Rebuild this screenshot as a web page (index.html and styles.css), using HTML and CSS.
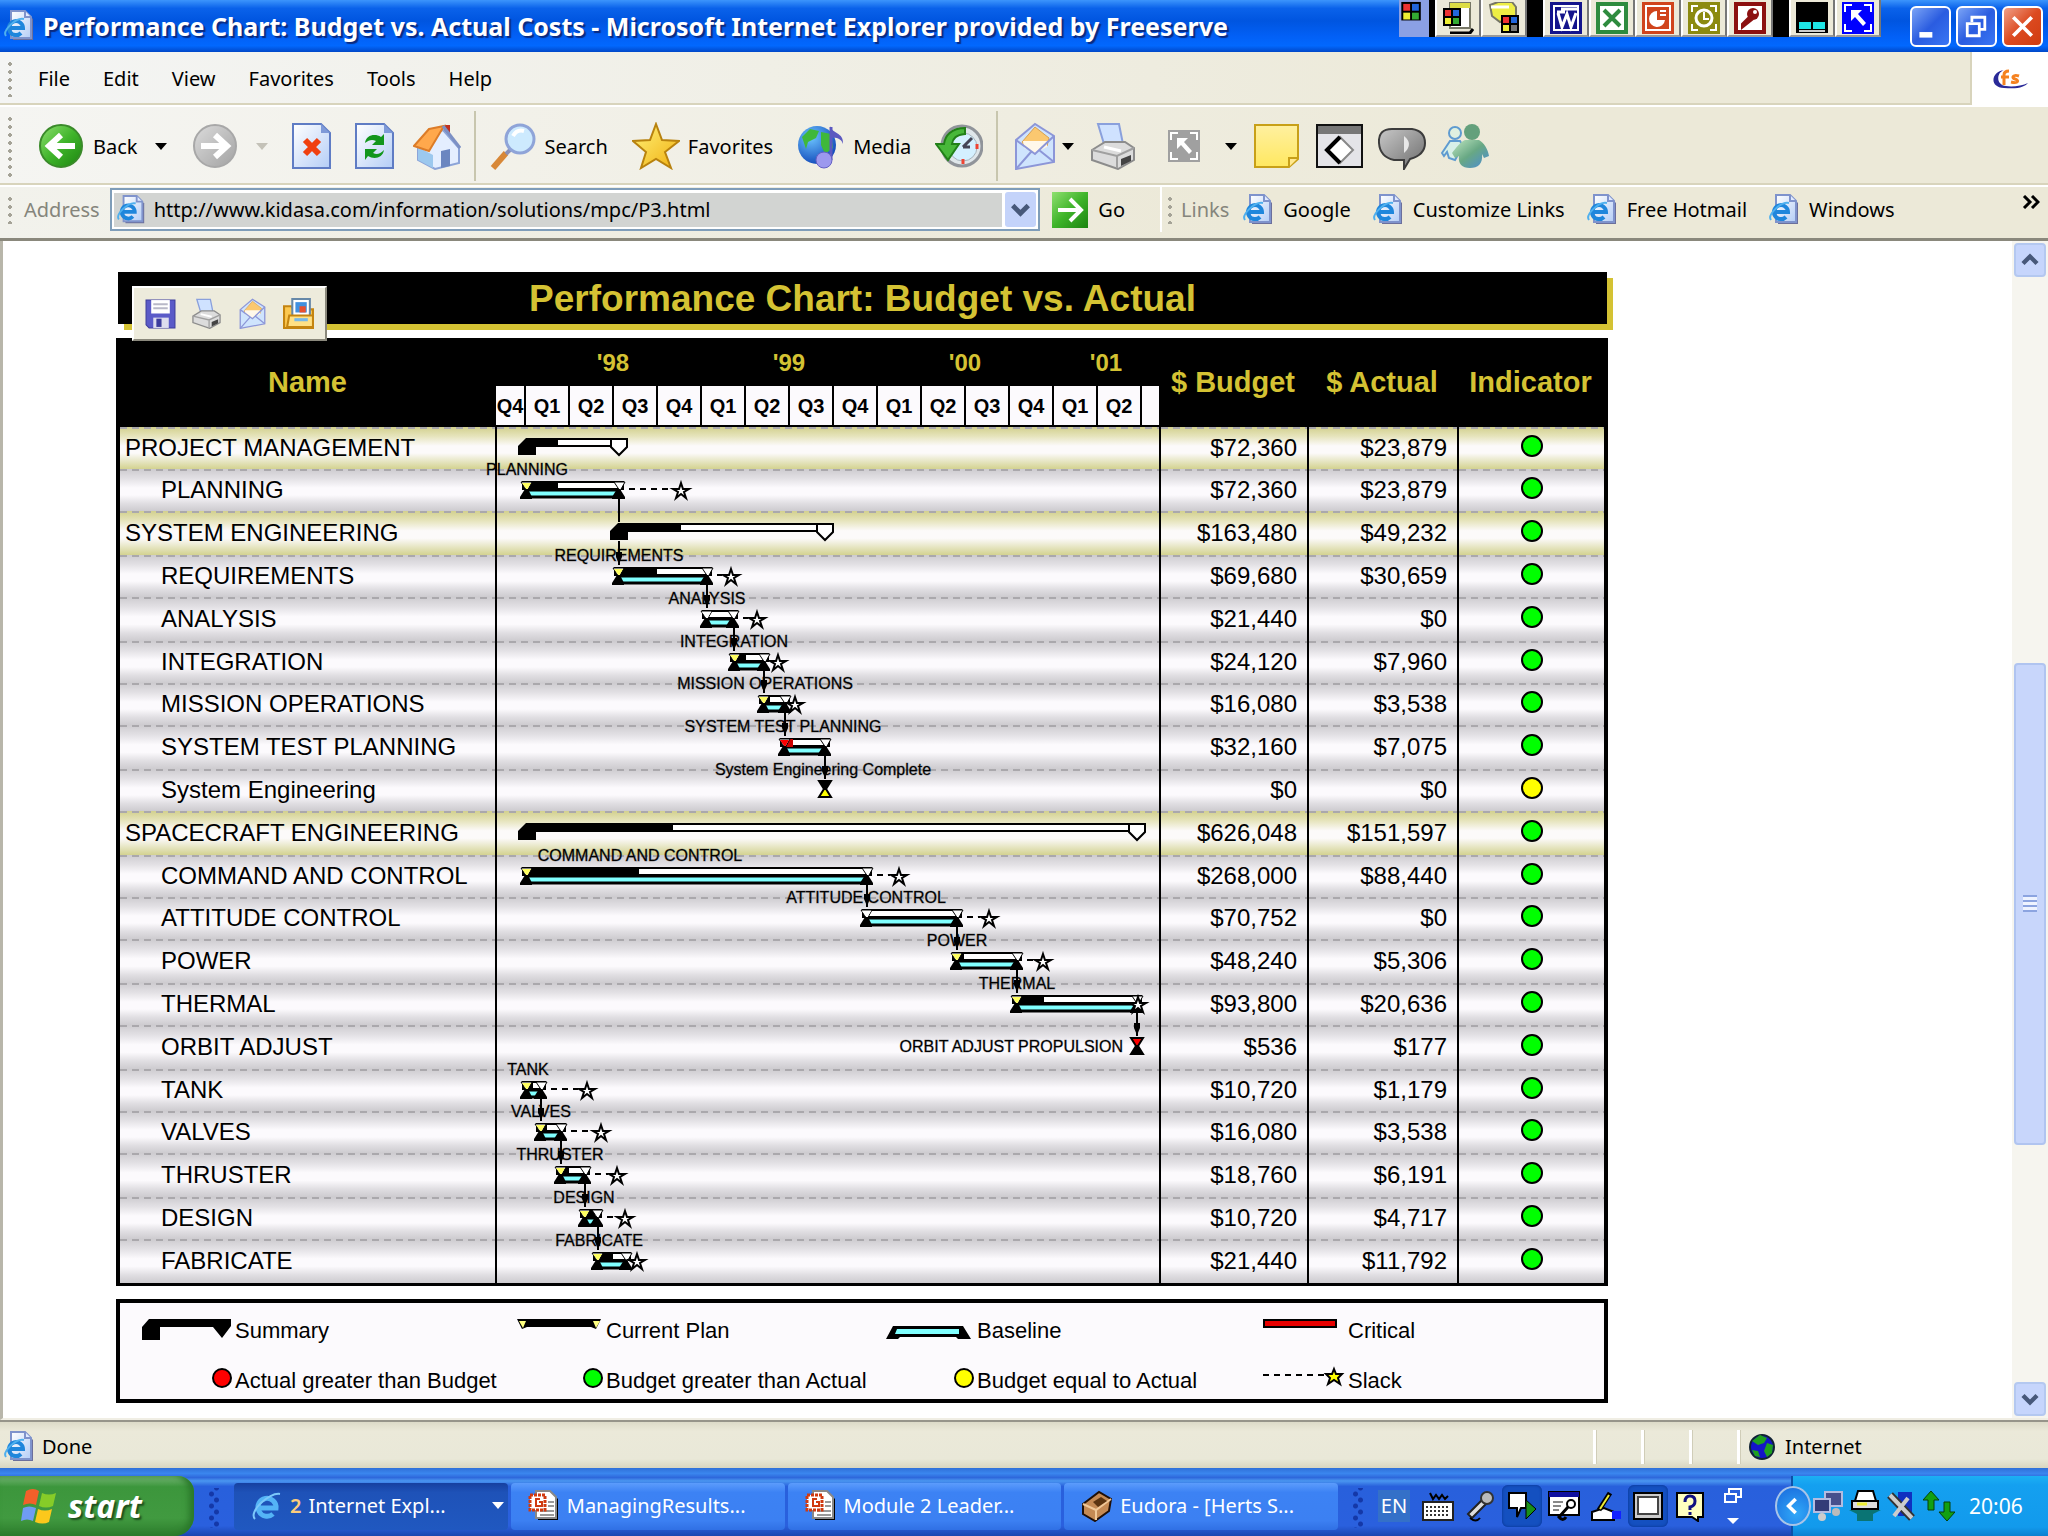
FILE: index.html
```html
<!DOCTYPE html>
<html lang="en">
<head>
  <meta charset="UTF-8" />
  <meta name="viewport" content="width=device-width, initial-scale=1.0"/>
  <title>Performance Chart: Budget vs. Actual Costs</title>
  <link rel="stylesheet" href="styles.css">
</head>
<body>

  <!-- Shared icons -->
  <svg class="sprite" aria-hidden="true">
    <defs>
      <linearGradient id="g-green" x1="0" y1="0" x2="1" y2="1"><stop offset="0" stop-color="#8fe070"/><stop offset=".5" stop-color="#3fb42a"/><stop offset="1" stop-color="#1c8410"/></linearGradient>
      <linearGradient id="g-grey" x1="0" y1="0" x2="1" y2="1"><stop offset="0" stop-color="#dcdcdc"/><stop offset="1" stop-color="#a2a2a2"/></linearGradient>
      <linearGradient id="g-page" x1="0" y1="0" x2="1" y2="1"><stop offset="0" stop-color="#fff"/><stop offset="1" stop-color="#b4cdf6"/></linearGradient>
      <linearGradient id="g-star" x1="0" y1="0" x2="1" y2="1"><stop offset="0" stop-color="#fff27a"/><stop offset="1" stop-color="#f0b010"/></linearGradient>
      <linearGradient id="g-note" x1="0" y1="0" x2="0" y2="1"><stop offset="0" stop-color="#fff0a0"/><stop offset="1" stop-color="#ffe860"/></linearGradient>
      <radialGradient id="g-globe" cx=".35" cy=".3" r=".8"><stop offset="0" stop-color="#6cc4ff"/><stop offset="1" stop-color="#0a3fb4"/></radialGradient>
      <linearGradient id="g-body" x1="0" y1="0" x2="1" y2="1"><stop offset="0" stop-color="#bfe6c0"/><stop offset=".5" stop-color="#68a884"/><stop offset="1" stop-color="#4a8ad8"/></linearGradient>
      <linearGradient id="g-talk" x1="0" y1="0" x2="1" y2="1"><stop offset="0" stop-color="#c8c8c8"/><stop offset="1" stop-color="#6c6c6c"/></linearGradient>
    </defs>
    <symbol id="i-page" viewBox="0 0 32 32">
      <path d="M9 3h14l6 6v21H9z" fill="#6b6f9c"/>
      <path d="M7 1h14l6 6v21H7z" fill="url(#g-page)" stroke="#7f93cc" stroke-width="2"/>
      <path d="M21 1v6h6" fill="#dfe9ff" stroke="#7f93cc" stroke-width="2"/>
      <path d="M4 18h15a7 7 0 1 0-2 5" fill="none" stroke="#1f86dc" stroke-width="4"/>
      <path d="M2 26c-4-5 10-19 18-17" fill="none" stroke="#4fb0ee" stroke-width="2"/>
    </symbol>
    <symbol id="i-ppt" viewBox="0 0 32 32">
      <path d="M10 3h14l6 6v21H10z" fill="#000"/>
      <path d="M8 1h14l6 6v21H8z" fill="#fff" stroke="#888" stroke-width="2"/>
      <path d="M20 12h6M20 16h6M12 21h14M12 25h14" stroke="#999" stroke-width="2"/>
      <path d="M2 5h15v15H2z" fill="#fff" stroke="#d03a10" stroke-width="3" stroke-dasharray="3 1"/>
      <path d="M12 9H8v7h6v-4h-3" fill="none" stroke="#d03a10" stroke-width="2"/>
    </symbol>
    <symbol id="i-printer" viewBox="0 0 48 48">
      <path d="M9 2h21l4 20H15z" fill="#cfe2ff" stroke="#8aa0dc" stroke-width="2"/>
      <path d="M3 28l13-8h20l9 6v12L29 47 3 38z" fill="#dcdcdc" stroke="#8c8c8c" stroke-width="2"/>
      <path d="M3 28l25 6 17-8M28 34v12" fill="none" stroke="#a0a0a0" stroke-width="2"/>
      <path d="M32 37l10-4v6l-10 5z" fill="#444"/>
      <path d="M15 25l17 4" stroke="#fff" stroke-width="3"/>
    </symbol>
    <symbol id="i-mail" viewBox="0 0 48 48">
      <path d="M5 18L24 2l19 12v26L5 47z" fill="#cfe4fd" stroke="#8c96d8" stroke-width="2"/>
      <path d="M11 20L24 5l14 11-2 8-12 6-10-5z" fill="#fbc870" stroke="#d8a050"/>
      <path d="M12 19h24v6l-12 6-11-5z" fill="#fff8ea"/>
      <path d="M5 18l19 14 19-18M5 47l15-17M43 40L28 28" fill="none" stroke="#8c96d8" stroke-width="2"/>
    </symbol>
    <symbol id="i-arrow-box" viewBox="0 0 32 32">
      <path d="M0 0h32v32H0z" fill="currentColor"/>
      <path d="M3 10V3h7M22 3h7v7M29 22v7h-7M10 29H3v-7" fill="none" stroke="#fff" stroke-width="2"/>
      <path d="M9 8h11l-4 4 8 9-3 3-8-9-4 4z" fill="#fff"/>
    </symbol>
  </svg>

  <header class="title-bar">
    <svg class="icon-s"><use href="#i-page"/></svg>
    <h1>Performance Chart: Budget vs. Actual Costs - Microsoft Internet Explorer provided by Freeserve</h1>
    <div class="office-bar">
      <span class="office-grip"><svg viewBox="0 0 28 38"><path d="M2 2h20v19H2z" fill="#000"/><path d="M4 4h7v7H4z" fill="#e33"/><path d="M13 4h7v7h-7z" fill="#26d"/><path d="M4 13h7v7H4z" fill="#ee3"/><path d="M13 13h7v7h-7z" fill="#3a3"/></svg></span>
      <button aria-label="New document"><svg viewBox="0 0 32 32"><path d="M8 0h20v26H8z" fill="#fff" stroke="#776" stroke-width="2"/><path d="M8 1h20v5H8z" fill="#dd4"/><path d="M8 31h20l3-4" stroke="#000" stroke-width="3" fill="none"/><path d="M1 6h18v18H1z" fill="#000"/><path d="M3 8h6v6H3z" fill="#e33"/><path d="M11 8h6v6h-6z" fill="#26d"/><path d="M3 16h6v6H3z" fill="#ee3"/><path d="M11 16h6v6h-6z" fill="#3a3"/></svg></button>
      <button aria-label="Open document"><svg viewBox="0 0 32 32"><path d="M2 3l8-3h14l4 5v9l-16 6-8-6z" fill="#ee4" stroke="#776" stroke-width="2"/><path d="M3 5h18" stroke="#fff" stroke-width="3"/><path d="M13 13h18v18H13z" fill="#000"/><path d="M15 15h6v6h-6z" fill="#e33"/><path d="M23 15h6v6h-6z" fill="#26d"/><path d="M15 23h6v6h-6z" fill="#ee3"/><path d="M23 23h6v6h-6z" fill="#777"/></svg></button>
      <span class="office-gap"></span>
      <button aria-label="Word"><svg viewBox="0 0 32 32"><path d="M0 0h32v32H0z" fill="#14148c"/><path d="M4 4h24v24H4z" fill="none" stroke="#fff" stroke-width="2"/><path d="M7 10h8M11 7h16M8 11l4 14 5-13 4 13 5-14" fill="none" stroke="#fff" stroke-width="3"/></svg></button>
      <button aria-label="Excel"><svg viewBox="0 0 32 32"><path d="M0 0h32v32H0z" fill="#2e8b3e"/><path d="M4 4h24v24H4z" fill="#fff"/><path d="M8 8l16 16M24 8L8 24" stroke="#2e8b3e" stroke-width="4"/></svg></button>
      <button aria-label="PowerPoint"><svg viewBox="0 0 32 32"><path d="M0 0h32v32H0z" fill="#d0441c"/><path d="M4 4h24v24H4z" fill="none" stroke="#fff" stroke-width="2"/><path d="M15 9a8 8 0 1 0 8 9h-8z" fill="#fff"/><path d="M18 9h6M18 13h6" stroke="#fff" stroke-width="2"/></svg></button>
      <button aria-label="Outlook"><svg viewBox="0 0 32 32"><path d="M0 0h32v32H0z" fill="#8c8a10"/><path d="M4 10V4h6M22 4h6v6M28 22v6h-6M10 28H4v-6" fill="none" stroke="#fff" stroke-width="2"/><circle cx="16" cy="16" r="8" fill="none" stroke="#fff" stroke-width="3"/><path d="M16 10v7h5" fill="none" stroke="#fff" stroke-width="2"/></svg></button>
      <button aria-label="Access"><svg viewBox="0 0 32 32"><path d="M0 0h32v32H0z" fill="#8c1010"/><path d="M4 4h24v24H4z" fill="#fff"/><circle cx="19" cy="12" r="6" fill="#8c1010"/><path d="M15 15l-7 7v4l10-8z" fill="#8c1010" stroke="#8c1010" stroke-width="2"/><circle cx="21" cy="10" r="2" fill="#fff"/></svg></button>
      <span class="office-gap"></span>
      <button aria-label="Desktop"><svg viewBox="0 0 32 32"><path d="M0 0h32v31H0z" fill="#000"/><path d="M3 20h12v7H3zM17 20h12v7H17z" fill="#1ee6e6"/><path d="M3 29h26" stroke="#ccc" stroke-width="2"/></svg></button>
      <button aria-label="Shortcut" class="blue"><svg><use href="#i-arrow-box"/></svg></button>
    </div>
    <div class="window-buttons">
      <button aria-label="Minimize"><svg viewBox="0 0 40 40"><path d="M8 26h14v6H8z" fill="#fff"/></svg></button>
      <button aria-label="Restore"><svg viewBox="0 0 40 40"><path d="M15 15V10h14v13h-5M10 17h13v13H10z" fill="none" stroke="#fff" stroke-width="3"/></svg></button>
      <button aria-label="Close" class="close"><svg viewBox="0 0 40 40"><path d="M10 10l20 20M30 10L10 30" stroke="#fff" stroke-width="4"/></svg></button>
    </div>
  </header>

  <nav class="menu-bar">
    <span class="grip"></span>
    <a href="#">File</a>
    <a href="#">Edit</a>
    <a href="#">View</a>
    <a href="#">Favorites</a>
    <a href="#">Tools</a>
    <a href="#">Help</a>
    <div class="brand">
      <svg viewBox="0 0 40 24"><path d="M14 3C2 4-2 20 14 21s20-1 24-5c-6 3-16 4-22 3C6 18 6 6 14 3z" fill="#2a2a98"/><path d="M14 18V8q0-4 5-4M11 10h8M29 9c-6-2-8 2-4 3s4 5-4 3" fill="none" stroke="#f58220" stroke-width="3"/></svg>
    </div>
  </nav>

  <div class="toolbar">
    <span class="grip"></span>
    <button class="labelled"><svg viewBox="0 0 48 48"><circle cx="24" cy="24" r="21" fill="url(#g-green)" stroke="#3a8a2a" stroke-width="2"/><path d="M38 24H13M24 13L12 24l12 11" fill="none" stroke="#fff" stroke-width="6"/></svg>Back<i class="caret far"></i></button>
    <button disabled aria-label="Forward"><svg viewBox="0 0 48 48"><circle cx="24" cy="24" r="21" fill="url(#g-grey)" stroke="#a8a8a8" stroke-width="2"/><path d="M10 24h25M24 13l12 11-12 11" fill="none" stroke="#fff" stroke-width="6"/></svg><i class="caret far"></i></button>
    <button aria-label="Stop"><svg viewBox="0 0 48 48"><path d="M6 2h28l9 9v35H6z" fill="url(#g-page)" stroke="#5f7cc4" stroke-width="2"/><path d="M34 2v9h9z" fill="#7f9ad8"/><path d="M18 18l14 14M32 18L18 32" stroke="#f04010" stroke-width="6"/></svg></button>
    <button aria-label="Refresh"><svg viewBox="0 0 48 48"><path d="M6 2h28l9 9v35H6z" fill="url(#g-page)" stroke="#5f7cc4" stroke-width="2"/><path d="M34 2v9h9z" fill="#7f9ad8"/><path d="M15 21c1-8 10-10 16-6l3-3v11H22l4-4c-4-2-7-1-11 2zM34 28c-1 8-10 10-16 6l-3 4V27h12l-4 4c4 2 7 1 11-3z" fill="#12961c"/></svg></button>
    <button aria-label="Home"><svg viewBox="0 0 48 48"><path d="M31 3h6v12h-6z" fill="#c03020"/><path d="M30 8l16 18v15L22 47 5 38V22z" fill="#e4eeff" stroke="#8ca4d8" stroke-width="2"/><path d="M5 25l15 8v13L5 38z" fill="#9cc8ee"/><path d="M16 7l15-3-15 25L1 24z" fill="#ffa84c" stroke="#dc7c28" stroke-width="2"/><path d="M30 4l17 22" stroke="#7c90c4" stroke-width="3"/><path d="M28 29l9-2v17l-9 2z" fill="#6b86c0"/></svg></button>
    <span class="sep"></span>
    <button class="labelled"><svg viewBox="0 0 48 48"><path d="M17 31L4 46" stroke="#d88838" stroke-width="6"/><path d="M22 27l-5 5" stroke="#8a90b8" stroke-width="4"/><circle cx="31" cy="17" r="14" fill="#cdeafe" stroke="#8fa4d8" stroke-width="3"/><path d="M24 14q4-7 11-5" fill="none" stroke="#fff" stroke-width="4"/></svg>Search</button>
    <button class="labelled"><svg viewBox="0 0 48 48"><path d="M24 2l6 16 17 1-14 11 6 16-15-9-15 9 5-16L1 19l17-1z" fill="url(#g-star)" stroke="#b8820e" stroke-width="2"/></svg>Favorites</button>
    <button class="labelled"><svg viewBox="0 0 48 48"><circle cx="20" cy="23" r="19" fill="url(#g-globe)"/><path d="M5 15l8-8 9 2-3 7-8 4-2 7zM24 10l10 2 2 14-8 6-4-9z" fill="#3fb83a"/><path d="M34 5v33" stroke="#5c58c0" stroke-width="3"/><path d="M33 4c2 8 14 6 13 18-2-6-7-7-13-6z" fill="#5c58c0"/><circle cx="27" cy="38" r="8" fill="#9c98ee" stroke="#6460c4"/></svg>Media</button>
    <button aria-label="History"><svg viewBox="0 0 48 48"><circle cx="27" cy="24" r="20" fill="#dfe6ea" stroke="#90949a" stroke-width="3"/><circle cx="28" cy="25" r="14" fill="#d4f0ff" stroke="#a8b4bc"/><path d="M28 25l9-9M28 25h7" stroke="#445" stroke-width="3"/><path d="M42 22v5M28 37v5" stroke="#e43" stroke-width="3"/><path d="M30 6C16 6 10 14 9 22H1l12 16 11-16h-7c1-6 4-9 13-10z" fill="#48b83a" stroke="#228018" stroke-width="2"/></svg></button>
    <span class="sep"></span>
    <button aria-label="Mail"><svg><use href="#i-mail"/></svg><i class="caret"></i></button>
    <button aria-label="Print"><svg><use href="#i-printer"/></svg></button>
    <button aria-label="Capture" class="grey"><svg viewBox="0 0 48 48"><use href="#i-arrow-box" x="8" y="8" width="32" height="32"/></svg><i class="caret far"></i></button>
    <button aria-label="Note"><svg viewBox="0 0 48 48"><path d="M3 3h43v34l-9 8H3z" fill="url(#g-note)" stroke="#c8a018" stroke-width="2"/><path d="M37 45v-9h9" fill="#ffe890" stroke="#c8a018" stroke-width="2"/></svg></button>
    <button aria-label="Discuss"><svg viewBox="0 0 48 48"><path d="M2 3h45v42H2z" fill="#e4e4e8" stroke="#111" stroke-width="2"/><path d="M3 4h43v8H3z" fill="#777"/><path d="M25 15L38 28 25 41 12 28z" fill="#fff" stroke="#888" stroke-width="2"/><path d="M25 15L12 28l13 13" fill="none" stroke="#000" stroke-width="4"/></svg></button>
    <button aria-label="Talk"><svg viewBox="0 0 48 48"><path d="M14 7h20q13 2 13 14T32 37l-6 10v-9H16Q2 35 1 21T14 7z" fill="url(#g-talk)" stroke="#3c3c3c" stroke-width="2"/><path d="M26 14q10 8 0 17z" fill="#e8e8e8"/></svg></button>
    <button aria-label="Messenger"><svg viewBox="0 0 48 48"><circle cx="14" cy="11" r="6" fill="#dff0e0" stroke="#5f9bd0" stroke-width="2"/><path d="M1 31l8-12h10l3 5-8 14-6-2-2-6-3 4z" fill="#d8f0e8" stroke="#5f9bd0" stroke-width="2"/><circle cx="31" cy="10" r="8" fill="#64a07c"/><path d="M24 18h14c5 3 9 9 10 16l-5 2-2-4c1 10-4 14-12 14s-12-4-11-12l-4 2-3-5c4-5 8-11 13-13z" fill="url(#g-body)"/></svg></button>
  </div>

  <div class="address-bar">
    <span class="grip"></span>
    <label for="address">Address</label>
    <div class="address-box">
      <svg class="icon-s"><use href="#i-page"/></svg>
      <input id="address" type="text" value="http://www.kidasa.com/information/solutions/mpc/P3.html">
      <button aria-label="Show addresses"><svg viewBox="0 0 32 36"><path d="M8 14l8 8 8-8" fill="none" stroke="#47587a" stroke-width="5"/></svg></button>
    </div>
    <button class="go"><svg viewBox="0 0 36 36"><path d="M0 0h36v36H0z" fill="url(#g-green)"/><path d="M6 18h20M18 7l11 11-11 11" fill="none" stroke="#fff" stroke-width="4"/></svg>Go</button>
    <div class="links">
      <span class="grip"></span>
      <span class="links-title">Links</span>
      <a href="#"><svg class="icon-s"><use href="#i-page"/></svg>Google</a>
      <a href="#"><svg class="icon-s"><use href="#i-page"/></svg>Customize Links</a>
      <a href="#"><svg class="icon-s"><use href="#i-page"/></svg>Free Hotmail</a>
      <a href="#"><svg class="icon-s"><use href="#i-page"/></svg>Windows</a>
      <button class="more" aria-label="More links"><svg viewBox="0 0 18 14"><path d="M2 1l6 6-6 6M10 1l6 6-6 6" fill="none" stroke="#000" stroke-width="3"/></svg></button>
    </div>
  </div>

  <div class="view">
    <main class="page">
      <section class="chart">
        <h2>Performance Chart: Budget vs. Actual</h2>

        <div class="image-tools">
          <button aria-label="Save image"><svg viewBox="0 0 30 30"><path d="M1 2h28v27H4l-3-3z" fill="#5a5ac8" stroke="#3c3c9c"/><path d="M6 2h18v13H6z" fill="#fff"/><path d="M8 6h14M8 10h14" stroke="#b8b8c8" stroke-width="2"/><path d="M8 19h15v10H8z" fill="#dde"/><path d="M11 20h5v8h-5z" fill="#3c3c9c"/></svg></button>
          <button aria-label="Print image"><svg><use href="#i-printer"/></svg></button>
          <button aria-label="Mail image"><svg><use href="#i-mail"/></svg></button>
          <button aria-label="My pictures"><svg viewBox="0 0 30 30"><path d="M1 8h7l2 3h19v18H1z" fill="#fcc850" stroke="#c48410" stroke-width="2"/><path d="M9 1h17v17H9z" fill="#fff" stroke="#6688a8" stroke-width="2"/><path d="M12 4h11v10H12z" fill="#4090e0"/><path d="M16 8h6v6h-6z" fill="#e85030"/><path d="M6 17h23v11H4z" fill="#ffe084" stroke="#c48410" stroke-width="2"/><path d="M11 21h13" stroke="#78b8e8" stroke-width="3"/></svg></button>
        </div>

        <table>
          <colgroup>
            <col>
            <col class="col-gantt">
            <col class="col-budget">
            <col class="col-actual">
            <col class="col-indicator">
          </colgroup>
          <thead>
            <tr>
              <th>Name</th>
              <th class="timeline">
                <div class="years">
                  <span>'98</span><span>'99</span><span>'00</span><span class="last">'01</span>
                </div>
                <div class="quarters">
                  <span>Q4</span><span>Q1</span><span>Q2</span><span>Q3</span><span>Q4</span><span>Q1</span><span>Q2</span><span>Q3</span><span>Q4</span><span>Q1</span><span>Q2</span><span>Q3</span><span>Q4</span><span>Q1</span><span>Q2</span><span></span>
                </div>
              </th>
              <th>$ Budget</th>
              <th>$ Actual</th>
              <th>Indicator</th>
            </tr>
          </thead>
          <tbody id="rows"></tbody>
        </table>

        <ul class="legend">
          <li><svg viewBox="0 0 112 30"><path d="M22 24V11l7-8h82v7l-9 12-9-11H40v13z"/></svg>Summary</li>
          <li><svg viewBox="0 0 112 30"><path d="M26 3h84l-5 10-5-2H36l-5 2z"/><path d="M28 5h7l-3 7zM102 5h7l-4 7z" fill="#ffff80"/></svg>Current Plan</li>
          <li><svg viewBox="0 0 112 30"><path d="M24 23l7-13h70l8 13H96l-2-2H38l-2 2z"/><path d="M35 13h62v5H33z" fill="#80ffff"/></svg>Baseline</li>
          <li><svg viewBox="0 0 112 30"><path d="M31 4h72v7H31z" fill="#e80000" stroke="#000" stroke-width="2"/></svg>Critical</li>
          <li><svg viewBox="0 0 112 30"><circle cx="102" cy="12" r="9" fill="#f00" stroke="#000" stroke-width="2"/></svg>Actual greater than Budget</li>
          <li><svg viewBox="0 0 112 30"><circle cx="102" cy="12" r="9" fill="#0f0" stroke="#000" stroke-width="2"/></svg>Budget greater than Actual</li>
          <li><svg viewBox="0 0 112 30"><circle cx="102" cy="12" r="9" fill="#ff0" stroke="#000" stroke-width="2"/></svg>Budget equal to Actual</li>
          <li><svg viewBox="0 0 112 30"><path d="M30 9h64" stroke="#000" stroke-width="2" stroke-dasharray="6 5"/><path d="M101 3l2 5h6l-4 4 2 6-6-4-6 4 2-6-4-4h6z" fill="#ff0" stroke="#000" stroke-width="2"/></svg>Slack</li>
        </ul>
      </section>
    </main>

    <div class="scrollbar">
      <button aria-label="Scroll up"><svg viewBox="0 0 32 32"><path d="M8 20l8-8 8 8" fill="none" stroke="#47587a" stroke-width="5"/></svg></button>
      <div class="track"><div class="thumb"></div></div>
      <button aria-label="Scroll down"><svg viewBox="0 0 32 32"><path d="M8 12l8 8 8-8" fill="none" stroke="#47587a" stroke-width="5"/></svg></button>
    </div>
  </div>

  <footer class="status-bar">
    <svg class="icon-s"><use href="#i-page"/></svg>
    <span class="status-text">Done</span>
    <span class="pane"></span>
    <span class="pane"></span>
    <span class="pane"></span>
    <span class="pane zone"><svg viewBox="0 0 28 28"><circle cx="14" cy="14" r="12" fill="#1414c8" stroke="#123" stroke-width="2"/><path d="M4 8l8-6 7 3-3 5-6 2zM19 10l6 2-1 8-5 4-3-6zM4 17l6 1 2 6-5-1z" fill="#1fa01f"/></svg>Internet</span>
  </footer>

  <div class="taskbar">
    <button class="start"><svg viewBox="0 0 38 38"><path d="M6 4q7-4 13 0l-3 14q-6-3-13 0z" fill="#f2602a"/><path d="M22 6q7 3 14 0l-3 13q-7 3-14 0z" fill="#86cc28"/><path d="M3 21q6-3 13 0l-3 13q-6-3-12 0z" fill="#6f9cf4"/><path d="M18 22q7 3 14 0l-3 13q-6 3-14 0z" fill="#fcc81c"/></svg>start</button>
    <span class="dots"></span>
    <div class="tasks">
      <button class="active"><svg viewBox="0 0 32 32"><path d="M7 18h18a9 9 0 1 0-3 6" fill="none" stroke="#54b4f6" stroke-width="5"/><path d="M4 29C-3 22 18 2 29 4" fill="none" stroke="#7cc8fa" stroke-width="2"/></svg><b>2</b>Internet Expl...<i class="caret"></i></button>
      <button><svg><use href="#i-ppt"/></svg>ManagingResults...</button>
      <button><svg><use href="#i-ppt"/></svg>Module 2 Leader...</button>
      <button><svg viewBox="0 0 32 32"><path d="M2 14L18 2l12 7-2 12-14 10L2 24z" fill="#c48a54" stroke="#201008" stroke-width="2"/><path d="M2 14l13 6 15-11M15 20v10" fill="none" stroke="#f0c898" stroke-width="2"/><path d="M12 12l8-5 6 4-9 6z" fill="#5a3410"/></svg>Eudora - [Herts S...</button>
    </div>
    <span class="dots"></span>
    <div class="language">
      <span class="en">EN</span>
      <button aria-label="Keyboard"><svg viewBox="0 0 32 32"><path d="M8 3l3 6 3-4 3 4 3-4 3 4 3-3" fill="none" stroke="#000" stroke-width="2"/><path d="M1 12h30v18H1z" fill="#fff" stroke="#222" stroke-width="2"/><path d="M4 17h24M4 21h24M4 25h24" stroke="#333" stroke-width="2" stroke-dasharray="2 2"/></svg></button>
      <button aria-label="Microphone"><svg viewBox="0 0 32 32"><path d="M4 24L19 9l4 4L8 28z" fill="#ddd" stroke="#222" stroke-width="2"/><circle cx="23" cy="8" r="6" fill="#bbb" stroke="#333" stroke-width="2"/><path d="M6 28q6 5 10 0" fill="none" stroke="#000" stroke-width="2"/></svg></button>
      <button aria-label="Speech" class="on"><svg viewBox="0 0 32 32"><path d="M3 3h17v15h-5l-4 9v-9H3z" fill="#fff" stroke="#000" stroke-width="2"/><path d="M20 10l10 9-10 10z" fill="#189018" stroke="#000"/></svg></button>
      <button aria-label="Handwriting tools"><svg viewBox="0 0 32 32"><path d="M1 2h30v23H1z" fill="#fff" stroke="#000" stroke-width="2"/><path d="M1 2h30v5H1z" fill="#1010a0"/><path d="M5 12h10M5 16h8M5 20h6" stroke="#888" stroke-width="2"/><circle cx="23" cy="14" r="4" fill="none" stroke="#000" stroke-width="2"/><path d="M20 17l-9 10q4 5 7 0" fill="none" stroke="#000" stroke-width="3"/></svg></button>
      <button aria-label="Writing pad"><svg viewBox="0 0 32 32"><path d="M2 22l12-4 10 4v8H2z" fill="#fff" stroke="#000" stroke-width="2"/><path d="M20 3L9 20" stroke="#000" stroke-width="5"/><path d="M19 5l-9 14" stroke="#ee3" stroke-width="2"/><path d="M22 21h9v8h-9z" fill="#12f"/></svg></button>
      <button aria-label="Pad" class="on"><svg viewBox="0 0 32 32"><path d="M2 3h28v26H2z" fill="#ccc" stroke="#000" stroke-width="2"/><path d="M6 7h20v17H6z" fill="#fff" stroke="#444" stroke-width="2"/></svg></button>
      <button aria-label="Help"><svg viewBox="0 0 32 32"><path d="M3 3h26v24h-5v4l-6-4H3z" fill="#ffffc0" stroke="#000" stroke-width="2"/><path d="M11 12q0-6 5-6t5 5-5 6v3M16 22v3" fill="none" stroke="#101080" stroke-width="3"/></svg></button>
      <button aria-label="Language options"><svg viewBox="0 0 32 44"><path d="M13 9V5h12v8h-4M9 10h11v8H9z" fill="none" stroke="#fff" stroke-width="2"/><path d="M11 34h12l-6 6z" fill="#fff"/></svg></button>
    </div>
    <div class="tray">
      <button class="expand" aria-label="Show hidden icons"><svg viewBox="0 0 36 36"><path d="M21 10l-8 8 8 8" fill="none" stroke="#fff" stroke-width="4"/></svg></button>
      <svg viewBox="0 0 32 32"><path d="M13 2h17v14H13z" fill="#46508c" stroke="#b4bce0" stroke-width="2"/><path d="M2 9h16v13H2z" fill="#323c78" stroke="#b4bce0" stroke-width="2"/><circle cx="10" cy="27" r="4" fill="#ccc"/><circle cx="24" cy="22" r="4" fill="#bbb"/></svg>
      <svg viewBox="0 0 32 32"><path d="M9 1h15l3 10H6z" fill="#fff" stroke="#000" stroke-width="2"/><path d="M3 11h26v8H3z" fill="#ddd" stroke="#000" stroke-width="2"/><path d="M8 14h10" stroke="#ee3" stroke-width="3"/><path d="M0 20h32l-8 4v7H8v-7z" fill="#0a7474"/></svg>
      <svg viewBox="0 0 32 32"><path d="M12 2h14v24H12z" fill="#1030c0"/><path d="M4 5l22 23" stroke="#333" stroke-width="8"/><path d="M4 5l22 23M22 8L8 26" stroke="#ccc" stroke-width="4"/></svg>
      <svg viewBox="0 0 32 32"><path d="M8 1l8 9h-5v10H5V10H0zM24 31l-8-9h5V12h6v10h5z" fill="#12a012" stroke="#064006"/></svg>
      <time>20:06</time>
    </div>
  </div>

  <script src="script.js"></script>
</body>
</html>
```
FILE: styles.css
```css
* {
  box-sizing: border-box;
}
body {
  margin: 0;
  height: 100vh;
  overflow: hidden;
  display: flex;
  flex-direction: column;
  background-color: #ece9d8;
  font-family: 'Noto Sans', Tahoma, sans-serif;
  font-size: 20px;
  color: #000;
}
button {
  border: none;
  background: none;
  padding: 0;
  font: inherit;
  color: inherit;
  display: flex;
  align-items: center;
}
svg {
  display: block;
  flex: none;
}
a {
  color: inherit;
  text-decoration: none;
}
.sprite {
  position: absolute;
  width: 0;
  height: 0;
}
.icon-s {
  width: 32px;
  height: 32px;
}
.grip {
  width: 4px;
  align-self: stretch;
  margin: 8px 0;
  background: radial-gradient(circle, #a5a397 0 2px, transparent 2px) 0 0 / 4px 8px;
}

/* Title bar */
.title-bar {
  flex: none;
  height: 52px;
  display: flex;
  align-items: center;
  padding: 0 5px 0 4px;
  background: linear-gradient(#3c95fc, #0a62ea 16%, #0055e0 40%, #0260f6 70%, #0268fe 88%, #0148c8);
  color: #fff;
}
.title-bar h1 {
  flex: 1;
  margin: 0 0 0 7px;
  font-size: 25px;
  line-height: 32px;
  white-space: nowrap;
  text-shadow: 2px 2px 1px #0a2a80;
}
.office-bar {
  display: flex;
  align-self: flex-start;
  height: 37px;
  background-color: #000;
}
.office-grip {
  width: 30px;
  margin-right: 6px;
  background-color: #8ba0e4;
}
.office-grip svg {
  width: 28px;
  height: 37px;
}
.office-bar button {
  width: 46px;
  justify-content: center;
  background-color: #ece9d8;
  border-right: 2px solid #777;
  border-left: 2px solid #fff;
  border-bottom: 2px solid #999;
}
.office-bar button svg {
  width: 32px;
  height: 32px;
}
.office-bar .blue {
  color: #0000ff;
}
.office-gap {
  width: 16px;
}
.window-buttons {
  display: flex;
  gap: 5px;
  margin-left: 29px;
}
.window-buttons button {
  width: 41px;
  height: 41px;
  border: 2px solid #fff;
  border-radius: 6px;
  background: linear-gradient(135deg, #7ba4f6, #2a5ce0 50%, #3a76f4);
}
.window-buttons .close {
  background: linear-gradient(135deg, #f0a088, #dc4a20 50%, #d03c10);
}

/* Menu bar */
.menu-bar {
  flex: none;
  height: 55px;
  display: flex;
  align-items: center;
  padding-left: 8px;
  border-bottom: 2px solid #fff;
  box-shadow: inset 0 -2px #d8d4bc;
  background: linear-gradient(90deg, #f4f5f4, #ece9d8 75%);
}
.menu-bar a {
  margin-left: 33px;
}
.menu-bar .grip + a {
  margin-left: 26px;
}
.brand {
  margin-left: auto;
  width: 78px;
  align-self: stretch;
  display: flex;
  align-items: center;
  justify-content: center;
  background-color: #fff;
  border-left: 2px solid #d8d4bc;
}
.brand svg {
  width: 40px;
  height: 24px;
}

/* Toolbar */
.toolbar {
  flex: none;
  height: 80px;
  display: flex;
  align-items: center;
  gap: 15px;
  padding-left: 8px;
  border-bottom: 2px solid #fff;
  box-shadow: inset 0 -2px #d8d4bc;
  background: linear-gradient(90deg, #f5f5f2, #ece9d8 75%);
}
.toolbar .grip + button {
  margin-left: 10px;
}
.toolbar button svg {
  width: 48px;
  height: 48px;
}
.toolbar .labelled {
  margin-right: 9px;
}
.toolbar .labelled svg {
  margin-right: 8px;
}
.toolbar .grey {
  color: #a0a0a0;
  margin-left: 8px;
}
.sep {
  width: 2px;
  height: 70px;
  background-color: #c8c6ae;
  margin: 0 -2px;
}
.caret {
  width: 0;
  height: 0;
  border: 6px solid transparent;
  border-top: 7px solid #000;
  border-bottom: none;
  margin-left: 3px;
}
.caret.far {
  margin-left: 17px;
}
.toolbar button:disabled .caret {
  border-top-color: #c4c2b8;
  margin-right: 4px;
}

/* Address bar */
.address-bar {
  flex: none;
  height: 54px;
  display: flex;
  align-items: center;
  padding: 0 8px 6px;
  border-bottom: 3px solid #8a887c;
  background: linear-gradient(90deg, #f2f2ec, #ece9d8 60%);
}
.address-bar label {
  margin: 0 10px 0 12px;
  color: #85857c;
}
.address-box {
  flex: 1;
  min-width: 0;
  height: 43px;
  display: flex;
  align-items: center;
  padding: 2px;
  border: 2px solid #7f9db9;
  background-color: #fff;
}
.address-box .icon-s {
  width: 36px;
  height: 34px;
  padding: 1px 3px;
  background-color: #d2d4d2;
}
.address-box input {
  flex: 1;
  min-width: 0;
  height: 34px;
  border: none;
  padding: 0 0 0 4px;
  background-color: #d2d4d2;
  font: inherit;
  color: inherit;
}
.address-box button {
  width: 31px;
  height: 35px;
  margin-left: 3px;
  border-radius: 3px;
  background-color: #c4d3fa;
}
.go {
  margin-left: 12px;
  gap: 10px;
}
.go svg {
  width: 36px;
  height: 36px;
}
.links {
  width: 880px;
  margin-left: 35px;
  display: flex;
  align-items: center;
  align-self: stretch;
  border-left: 2px solid #fff;
  padding-left: 6px;
}
.links-title {
  margin-left: 9px;
  margin-right: 14px;
  color: #85857c;
}
.links a {
  display: flex;
  align-items: center;
  gap: 8px;
  margin-right: 22px;
  white-space: nowrap;
}
.more {
  margin: 0 0 16px auto;
}
.more svg {
  width: 18px;
  height: 14px;
}

/* Page area */
.view {
  flex: 1;
  min-height: 0;
  display: flex;
  background-color: #fff;
  border-left: 3px solid #b8b6aa;
  border-bottom: 2px solid #f0eee4;
}
.page {
  flex: 1;
  min-width: 0;
  overflow: hidden;
  padding: 31px 24px 0 113px;
}
.chart {
  position: relative;
  max-width: 1492px;
  font-family: 'Liberation Sans', Arial, sans-serif;
}
.chart h2 {
  margin: 0 1px 14px 2px;
  height: 52px;
  line-height: 54px;
  font-size: 37px;
  text-align: center;
  color: #d4c233;
  background-color: #000;
  box-shadow: 6px 6px #d4c233;
}
.image-tools {
  position: absolute;
  left: 16px;
  top: 14px;
  display: flex;
  gap: 15px;
  padding: 10px 11px;
  background-color: #edebdc;
  border: 2px solid #fff;
  border-right-color: #8a887c;
  border-bottom-color: #8a887c;
}
.image-tools svg {
  width: 31px;
  height: 31px;
}
table {
  width: 100%;
  table-layout: fixed;
  border-spacing: 0;
  border: 4px solid #000;
  border-top: none;
  border-bottom-width: 3px;
}
.col-gantt {
  width: 664px;
}
.col-budget {
  width: 148px;
}
.col-actual {
  width: 150px;
}
.col-indicator {
  width: 147px;
}
th {
  height: 89px;
  padding: 0;
  background-color: #000;
  color: #d4c233;
  font-size: 29px;
  white-space: nowrap;
}
.timeline {
  padding-left: 1px;
  vertical-align: bottom;
}
.years {
  display: flex;
  height: 48px;
  padding-left: 29px;
  line-height: 50px;
  font-size: 24px;
}
.years span {
  width: 176px;
}
.years .last {
  flex: 1;
}
.quarters {
  display: grid;
  grid-template-columns: 30px repeat(14, 44px) 1fr;
  height: 41px;
  border-bottom: 2px solid #000;
  background-color: #fcfafd;
  color: #000;
  font-size: 20px;
  line-height: 40px;
}
.quarters span {
  display: flex;
  justify-content: center;
  border-right: 2px solid #000;
}
.quarters span:last-child {
  border-right: none;
}
tbody tr {
  height: 42px;
}
tbody tr:nth-child(5n+3),
tbody tr:nth-child(5n) {
  height: 44px;
}
td {
  padding: 0 10px;
  border-left: 2px solid #000;
  font-size: 24px;
  line-height: 28px;
  text-align: right;
  background:
    repeating-linear-gradient(90deg, #aaa8ac 0 7px, transparent 7px 12px) top / 100% 2px no-repeat,
    linear-gradient(#cdcbcf, #e2e0e4 22%, #fcfafd 45%, #fcfafd 62%, #e0dee2 82%, #cdcbcf);
}
.summary td {
  background:
    repeating-linear-gradient(90deg, #aaa8ac 0 7px, transparent 7px 12px) top / 100% 2px no-repeat,
    linear-gradient(#d2d08e, #e6e4bc 22%, #fcfafa 45%, #fcfafa 62%, #e6e5c2 82%, #d3d290);
}
td.name {
  border-left: none;
  padding-left: 41px;
  text-align: left;
}
.summary td.name {
  padding-left: 5px;
}
td.gantt {
  padding: 0 0 0 2px;
}
.gantt svg {
  position: relative;
  width: 660px;
  height: 42px;
  overflow: visible;
}
.gantt text {
  font-size: 16px;
  stroke: #000;
  stroke-width: 1px;
  stroke-opacity: 0.3;
}
.dot {
  display: block;
  width: 22px;
  height: 22px;
  margin: -4px auto 0;
  border: 2px solid #000;
  border-radius: 50%;
  background-color: #00ff00;
}
.dot.yellow {
  background-color: #ffff00;
}
.legend {
  display: grid;
  grid-template-columns: repeat(4, minmax(0, 1fr));
  row-gap: 20px;
  margin: 13px 0 0;
  padding: 13px 0 3px;
  border: 4px solid #000;
  list-style: none;
  font-size: 22px;
  line-height: 30px;
  background-color: #fcfafd;
}
.legend li {
  display: flex;
  align-items: flex-end;
  gap: 3px;
  white-space: nowrap;
}
.legend svg {
  width: 112px;
  height: 30px;
}

/* Scrollbar */
.scrollbar {
  width: 36px;
  display: flex;
  flex-direction: column;
  padding: 2px;
  background-color: #f6f5ef;
}
.scrollbar button {
  width: 32px;
  height: 34px;
  border: 2px solid #b4c8f0;
  border-radius: 4px;
  background-color: #c6d5fc;
}
.track {
  flex: 1;
  padding-top: 386px;
}
.thumb {
  height: 67%;
  border: 2px solid #b0c4f0;
  border-radius: 4px;
  background: repeating-linear-gradient(#8ca4e0 0 2px, #eef3ff 2px 5px) center / 14px 17px no-repeat, #c8d6fb;
}

/* Status bar */
.status-bar {
  flex: none;
  height: 48px;
  display: flex;
  align-items: center;
  padding: 3px 4px 0;
  border-top: 2px solid #96948a;
  background: linear-gradient(#dcdac8, #ebe9d9 20%, #e9e8d8 80%, #d8d5c0);
}
.status-text {
  flex: 1;
  margin-left: 6px;
}
.pane {
  width: 48px;
  height: 34px;
  border-left: 3px solid #fff;
  box-shadow: inset 1px 0 #d0cdb8;
}
.pane.zone {
  width: 307px;
  display: flex;
  align-items: center;
  gap: 9px;
  padding-left: 8px;
}
.zone svg {
  width: 28px;
  height: 28px;
}

/* Taskbar */
.taskbar {
  flex: none;
  height: 68px;
  display: flex;
  background: linear-gradient(#2f6fd8, #3a86ee 8%, #2e68dc 14%, #4a96f0 19%, #2860dc 27%, #2a60de 85%, #1a44b0);
  color: #fff;
}
.start {
  width: 194px;
  margin-top: 8px;
  padding-left: 20px;
  gap: 10px;
  border-radius: 0 16px 20px 0;
  background: linear-gradient(#78b878, #3c963c 18%, #419a40 70%, #2c7c2c);
  box-shadow: inset -5px 0 6px #2a782a;
  font-size: 32px;
  font-weight: bold;
  font-style: italic;
  line-height: 40px;
  text-shadow: 2px 2px 2px #1c4c1c;
}
.start svg {
  width: 38px;
  height: 38px;
}
.dots {
  width: 10px;
  margin: 20px 15px 8px;
  background:
    radial-gradient(circle, #1438a8 0 2px, transparent 3px) 0 0 / 5px 12px repeat-y,
    radial-gradient(circle, #1438a8 0 2px, transparent 3px) 5px 6px / 5px 12px repeat-y;
}
.tasks {
  flex: 1;
  min-width: 0;
  display: grid;
  grid-template-columns: repeat(4, 1fr);
  gap: 3px;
  margin: 15px 0 6px;
}
.tasks button {
  min-width: 0;
  padding: 0 4px 2px 17px;
  gap: 7px;
  border-radius: 4px;
  background: linear-gradient(#5c9cfc, #3c82f4 20%, #3c80f2 80%, #3070e4);
  white-space: nowrap;
}
.tasks svg {
  width: 32px;
  height: 32px;
}
.tasks .active {
  background: linear-gradient(#1640a0, #1e52b8 20%, #2058c0);
}
.tasks b {
  font-weight: 600;
  color: #fccc7c;
}
.tasks .caret {
  margin-left: auto;
  border-top-color: #fff;
}
.language {
  width: 413px;
  display: flex;
  align-items: center;
  gap: 2px;
  padding-top: 8px;
}
.en {
  width: 32px;
  margin-right: 6px;
  line-height: 32px;
  text-align: center;
  background-color: #3470c8;
}
.language button {
  width: 40px;
  height: 42px;
  justify-content: center;
  border-radius: 6px;
}
.language button svg {
  width: 32px;
  height: 32px;
}
.language button:last-child svg {
  height: 44px;
}
.language .on {
  background-color: #1450c0;
  box-shadow: inset 0 0 3px #08308c;
}
.tray {
  width: 257px;
  margin-top: 8px;
  display: flex;
  align-items: center;
  gap: 5px;
  border-left: 2px solid #0c50a8;
  background: linear-gradient(#1cb0f4, #14a0f0 15%, #129aec 85%, #0c80d0);
}
.tray svg {
  width: 32px;
  height: 32px;
}
.expand {
  margin-left: -18px;
  margin-right: -4px;
  border: 2px solid #a8c4e8;
  border-radius: 50%;
  background: radial-gradient(circle at 60% 70%, #30a8f8, #1868dc);
}
.expand svg {
  width: 32px;
  height: 36px;
}
.tray time {
  margin-left: 9px;
  font-size: 21px;
}
```
FILE: script.js
```js
// start / done / end / slack are x positions on the timeline, label is the centre of the caption
const rows = [
  { name: 'PROJECT MANAGEMENT', budget: '$72,360', actual: '$23,879', summary: true, start: 28, done: 59, end: 120 },
  { name: 'PLANNING', budget: '$72,360', actual: '$23,879', label: 28, start: 28, done: 59, end: 120, slack: 182 },
  { name: 'SYSTEM ENGINEERING', budget: '$163,480', actual: '$49,232', summary: true, start: 120, done: 182, end: 326, link: 120 },
  { name: 'REQUIREMENTS', budget: '$69,680', actual: '$30,659', label: 120, start: 120, done: 158, end: 208, slack: 232, link: 120 },
  { name: 'ANALYSIS', budget: '$21,440', actual: '$0', label: 208, start: 208, end: 234, slack: 258, link: 208 },
  { name: 'INTEGRATION', budget: '$24,120', actual: '$7,960', label: 235, start: 236, done: 247, end: 265, slack: 279, link: 235 },
  { name: 'MISSION OPERATIONS', budget: '$16,080', actual: '$3,538', label: 266, start: 265, done: 271, end: 286, slack: 296, link: 265 },
  { name: 'SYSTEM TEST PLANNING', budget: '$32,160', actual: '$7,075', label: 284, start: 286, done: 294, end: 326, critical: true, link: 286 },
  { name: 'System Engineering', caption: 'System Engineering Complete', budget: '$0', actual: '$0', label: 324, milestone: 326, top: '#000', bottom: '#ff0', link: 326, dot: 'yellow' },
  { name: 'SPACECRAFT ENGINEERING', budget: '$626,048', actual: '$151,597', summary: true, start: 28, done: 174, end: 638 },
  { name: 'COMMAND AND CONTROL', budget: '$268,000', actual: '$88,440', label: 141, start: 28, done: 140, end: 368, slack: 400 },
  { name: 'ATTITUDE CONTROL', budget: '$70,752', actual: '$0', label: 367, start: 368, end: 458, slack: 490, link: 368 },
  { name: 'POWER', budget: '$48,240', actual: '$5,306', label: 458, start: 458, done: 465, end: 518, slack: 544, link: 458 },
  { name: 'THERMAL', budget: '$93,800', actual: '$20,636', label: 518, start: 518, done: 545, end: 638, slack: 639, link: 518 },
  { name: 'ORBIT ADJUST', caption: 'ORBIT ADJUST PROPULSION', budget: '$536', actual: '$177', side: 624, milestone: 638, top: '#f00', bottom: '#000', link: 638 },
  { name: 'TANK', budget: '$10,720', actual: '$1,179', label: 29, start: 28, done: 34, end: 42, slack: 88 },
  { name: 'VALVES', budget: '$16,080', actual: '$3,538', label: 42, start: 42, done: 48, end: 62, slack: 102, link: 42 },
  { name: 'THRUSTER', budget: '$18,760', actual: '$6,191', label: 61, start: 62, done: 70, end: 86, slack: 118, link: 62 },
  { name: 'DESIGN', budget: '$10,720', actual: '$4,717', label: 85, start: 86, done: 96, end: 98, slack: 126, link: 86 },
  { name: 'FABRICATE', budget: '$21,440', actual: '$11,792', label: 100, start: 99, done: 114, end: 127, slack: 138, link: 99 }
];

function summaryBar(r) {
  return `
    <path d="M${r.start} 12H${r.end}V19H${r.start}z" fill="#fff" stroke="#000" stroke-width="2"/>
    <path d="M${r.start - 9} 28V19l8-8H${r.done}V20H${r.start + 9}V28z"/>
    <path d="M${r.end - 8} 12h16v8l-8 8-8-8z" fill="#fff" stroke="#000" stroke-width="2"/>`;
}

function taskBar(r) {
  const first = r.critical ? '#f00' : r.done ? '#ffff60' : '#fff';
  let out = `
    <path d="M${r.start - 4} 13H${r.end + 4}V20H${r.start - 4}z" fill="#fff" stroke="#000" stroke-width="2"/>
    <path d="M${r.start} 21H${r.end}V28H${r.start}z" fill="#80ffff" stroke="#000" stroke-width="3"/>`;
  if (r.done) {
    out += `<path d="M${r.start} 13H${r.done}V21H${r.start}z" fill="${r.critical ? '#c00' : '#000'}"/>`;
  }
  out += `
    <path d="M${r.start - 6} 13h11l-5 9zM${r.end - 5} 13h11l-5 9z" fill="#fff" stroke="#000" stroke-width="1"/>
    <path d="M${r.start - 5} 14h9l-4 7z" fill="${first}"/>
    <path d="M${r.start - 7} 30v-2l5-8h3l4 8v2zM${r.end - 7} 30v-2l5-8h3l5 8v2z"/>`;
  if (r.slack) {
    out += `
      <path d="M${r.end + 10} 20H${Math.max(r.end + 10, r.slack - 9)}" stroke="#000" stroke-width="2" stroke-dasharray="6 5"/>
      <path d="M${r.slack} 14l2 6h6l-5 3 2 6-5-4-5 4 2-6-5-3h6z" fill="#fff" stroke="#000" stroke-width="2"/>`;
  }
  return out;
}

function milestone(r) {
  const x = r.milestone;
  return `
    <path d="M${x - 6} 12h12l-5 8h-2z" fill="${r.top}" stroke="#000" stroke-width="2"/>
    <path d="M${x - 6} 28h12l-5-8h-2z" fill="${r.bottom}" stroke="#000" stroke-width="2"/>`;
}

function gantt(r) {
  let out = '';
  if (r.link) {
    out += `<path d="M${r.link} -14V10" stroke="#000" stroke-width="2"/>`;
    if (!r.summary) {
      out += `<path d="M${r.link - 3} -3h6v5l-3 7-3-7z"/>`;
    }
  }
  out += r.summary ? summaryBar(r) : r.milestone ? milestone(r) : taskBar(r);
  if (r.label) {
    out += `<text x="${r.label}" y="6" text-anchor="middle">${r.caption || r.name}</text>`;
  }
  if (r.side) {
    out += `<text x="${r.side}" y="26" text-anchor="end">${r.caption}</text>`;
  }
  return `<svg>${out}</svg>`;
}

document.getElementById('rows').innerHTML = rows.map(r => `
  <tr class="${r.summary ? 'summary' : 'task'}">
    <td class="name">${r.name}</td>
    <td class="gantt">${gantt(r)}</td>
    <td>${r.budget}</td>
    <td>${r.actual}</td>
    <td><span class="dot ${r.dot || ''}"></span></td>
  </tr>`).join('');
```
